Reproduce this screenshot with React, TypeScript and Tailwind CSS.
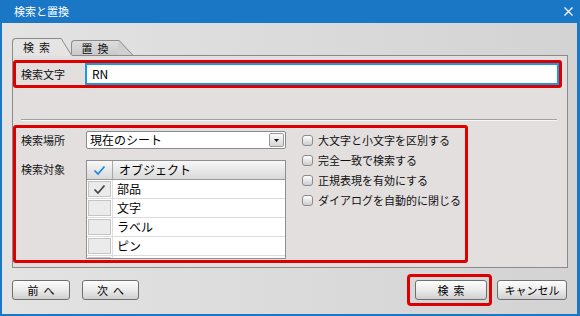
import React from "react";

const CheckMark = ({ color }: { color: string }) => (
  <svg width="13" height="11" viewBox="0 0 13 11">
    <path d="M1.5 5.5 L5 9 L11.5 1.5" fill="none" stroke={color} strokeWidth="1.7" />
  </svg>
);

// two characters with a visible gap, like "検 索"
const Spaced = ({ a, b }: { a: string; b: string }) => (
  <span className="flex gap-[5px]">
    <span>{a}</span>
    <span>{b}</span>
  </span>
);

const Button = ({ children, className }: { children: React.ReactNode; className: string }) => (
  <button
    className={`flex h-[20px] items-center justify-center rounded-[3px] border border-[#6f6f6f] bg-linear-to-b from-[#fdfdfd] via-[#ebebeb] to-[#cfcfcf] text-[11px] leading-none text-black shadow-[inset_0_1px_0_#ffffff] ${className}`}
  >
    {children}
  </button>
);

const Option = ({ label }: { label: string }) => (
  <div className="flex h-[20px] items-center gap-[5px]">
    <span className="h-[11px] w-[11px] rounded-[3px] border border-[#8c8c8c] bg-linear-to-b from-[#ffffff] to-[#cdcdcd]" />
    <span>{label}</span>
  </div>
);

export default function App() {
  const rows: { label: string; checked: boolean }[] = [
    { label: "部品", checked: true },
    { label: "文字", checked: false },
    { label: "ラベル", checked: false },
    { label: "ピン", checked: false },
    { label: "", checked: false },
  ];

  const options: string[] = [
    "大文字と小文字を区別する",
    "完全一致で検索する",
    "正規表現を有効にする",
    "ダイアログを自動的に閉じる",
  ];

  return (
    <div className="flex h-[316px] w-[580px] flex-col bg-[#1a77c6] pb-[2px] pl-[2px] pr-[3px] font-['Noto_Sans_CJK_JP','Noto_Sans',sans-serif] text-[11px] text-[#111]">
      {/* title bar */}
      <div className="flex h-[23px] shrink-0 items-center justify-between pl-[12px] pr-[4px] text-white">
        <span className="text-[11px]">検索と置換</span>
        <svg width="9" height="9" viewBox="0 0 9 9">
          <path d="M0.5 0.5 L8.5 8.5 M8.5 0.5 L0.5 8.5" stroke="#ffffff" strokeWidth="1.3" />
        </svg>
      </div>

      {/* body */}
      <div className="flex flex-1 flex-col bg-linear-to-r from-[#e3e3e3] to-[#d3d3d3] pl-[10px] pr-[9px] pt-[15px]">
        {/* tabs */}
        <div className="-mb-[1px] flex items-end">
          <div className="relative z-10 flex h-[18px]">
            <div className="flex w-[48px] items-center justify-center rounded-tl-[4px] border-l border-t border-[#8a8a8a] bg-[#e6e4e3] pb-[1px]">
              <Spaced a="検" b="索" />
            </div>
            <svg width="12" height="18" viewBox="0 0 12 18">
              <path d="M0 0 H1 L12 17 V18 H0 Z" fill="#e6e4e3" />
              <path d="M0 0.5 H1.2 L11.7 17.5" fill="none" stroke="#8a8a8a" />
            </svg>
          </div>
          <div className="-ml-[1px] mb-[1px] flex h-[15px]">
            <div className="flex w-[47px] items-center justify-center rounded-tl-[4px] border-l border-t border-[#8a8a8a] bg-linear-to-b from-[#dedede] to-[#c9c9c9]">
              <Spaced a="置" b="換" />
            </div>
            <svg width="15" height="15" viewBox="0 0 15 15">
              <path d="M0 0 H1 L15 15 H0 Z" fill="#cfcfcf" />
              <path d="M0 0.5 H1.2 L14.7 15" fill="none" stroke="#8a8a8a" />
            </svg>
          </div>
        </div>

        {/* panel */}
        <div className="flex h-[213px] w-[556px] flex-col border border-[#8a8a8a] bg-[#e2dfde]">
          <div className="mt-[4px] flex h-[28px] w-[549px] items-center rounded-[3px] border-[3px] border-[#dd0000] pl-[5px]">
            <span className="w-[64px]">検索文字</span>
            <div className="flex h-[22px] flex-1 items-center border-2 border-[#1a9be0] bg-white pl-[5px] text-[12px] text-black">
              RN
            </div>
          </div>

          <div className="ml-[8px] mr-[10px] mt-[31px] border-b border-t border-b-[#f6f6f6] border-t-[#a2a2a2]" />

          <div className="mt-[4px] flex h-[138px] w-[455px] rounded-[3px] border-[3px] border-[#dd0000]">
            <div className="flex flex-col pl-[5px] pt-[3px]">
              <div className="flex h-[18px] items-center">
                <span className="w-[65px]">検索場所</span>
                <div className="flex h-[18px] w-[200px] items-center justify-between rounded-[2px] border border-[#8a8a8a] bg-white pl-[3px] pr-[1px]">
                  <span className="text-[12px] text-black">現在のシート</span>
                  <span className="flex h-[14px] w-[15px] items-center justify-center rounded-[2px] border border-[#9a9a9a] bg-linear-to-b from-[#fafafa] to-[#d6d6d6]">
                    <svg width="5" height="3" viewBox="0 0 5 3">
                      <path d="M0 0 H5 L2.5 3 Z" fill="#111" />
                    </svg>
                  </span>
                </div>
              </div>

              <div className="mt-[11px] flex">
                <span className="flex h-[19px] w-[65px] items-center">検索対象</span>
                <div className="flex h-[99px] w-[200px] flex-col overflow-hidden border border-[#8e8e8e] bg-white">
                  <div className="flex h-[19px] shrink-0 border-b border-[#9a9a9a] bg-linear-to-b from-[#f8f8f8] to-[#d9d9d9]">
                    <div className="flex w-[26px] items-center justify-center border-r border-[#a8a8a8]">
                      <CheckMark color="#1b86e0" />
                    </div>
                    <div className="flex items-center pl-[6px] text-[12px] text-black">オブジェクト</div>
                  </div>
                  {rows.map(({ label, checked }, i) => (
                    <div key={i} className="flex h-[19px] shrink-0 border-b border-[#dcdcdc]">
                      <div className="flex w-[26px] items-center justify-center border-r border-[#dcdcdc] px-[1px] py-[1px]">
                        <div className="flex h-full w-full items-center justify-center border border-[#c4c4c4] bg-[#ebebeb]">
                          {checked && <CheckMark color="#444444" />}
                        </div>
                      </div>
                      <div className="flex items-center pl-[4px] text-[12px] text-black">{label}</div>
                    </div>
                  ))}
                </div>
              </div>
            </div>

            <div className="ml-[16px] flex flex-col pt-[2px]">
              {options.map((o) => (
                <Option key={o} label={o} />
              ))}
            </div>
          </div>
        </div>

        {/* buttons */}
        <div className="mt-[6px] flex h-[32px] items-center justify-between pr-[1px]">
          <div className="flex gap-[12px]">
            <Button className="w-[58px]">
              <Spaced a="前" b="へ" />
            </Button>
            <Button className="w-[57px]">
              <Spaced a="次" b="へ" />
            </Button>
          </div>
          <div className="flex items-center gap-[5px]">
            <div className="flex h-[32px] w-[85px] items-center rounded-[4px] border-[3px] border-[#dd0000] pl-[5px]">
              <Button className="w-[72px]">
                <Spaced a="検" b="索" />
              </Button>
            </div>
            <Button className="w-[70px]">キャンセル</Button>
          </div>
        </div>
      </div>
    </div>
  );
}
